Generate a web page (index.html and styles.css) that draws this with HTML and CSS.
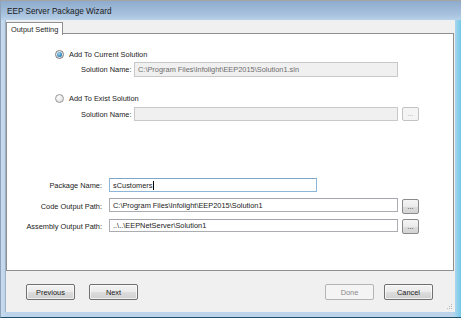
FILE: index.html
```html
<!DOCTYPE html>
<html>
<head>
<meta charset="utf-8">
<link rel="stylesheet" href="styles.css">
</head>
<body>
<div class="window">
  <div class="titlebar">EEP Server Package Wizard</div>
  <div class="frame">
    <div class="client">
      <div class="tabstrip">
        <div class="tab">Output Setting</div>
      </div>
      <div class="panel">
        <div class="radio-row first">
          <span class="radio checked"><span class="dot"></span></span>
          <span>Add To Current Solution</span>
        </div>
        <div class="sub-row r1">
          <span class="sub-label">Solution Name:</span>
          <div class="textbox disabled">C:\Program Files\Infolight\EEP2015\Solution1.sln</div>
        </div>
        <div class="radio-row second">
          <span class="radio"></span>
          <span>Add To Exist Solution</span>
        </div>
        <div class="sub-row r2">
          <span class="sub-label">Solution Name:</span>
          <div class="textbox disabled"></div>
          <div class="browse disabled">...</div>
        </div>
        <div class="form">
          <div class="form-row pkg">
            <span class="form-label">Package Name:</span>
            <div class="textbox focused short">sCustomers<span class="caret"></span></div>
          </div>
          <div class="form-row code">
            <span class="form-label">Code Output Path:</span>
            <div class="textbox">C:\Program Files\Infolight\EEP2015\Solution1</div>
            <div class="browse">...</div>
          </div>
          <div class="form-row asm">
            <span class="form-label">Assembly Output Path:</span>
            <div class="textbox">..\..\EEPNetServer\Solution1</div>
            <div class="browse">...</div>
          </div>
        </div>
      </div>
      <div class="buttonbar">
        <div class="btn-group left">
          <div class="btn">Previous</div>
          <div class="btn">Next</div>
        </div>
        <div class="btn-group right">
          <div class="btn disabled">Done</div>
          <div class="btn">Cancel</div>
        </div>
        <svg class="grip" width="6" height="6" viewBox="0 0 6 6">
          <rect x="4" y="0" width="1" height="1" fill="#b9b9b9"/>
          <rect x="2" y="2" width="1" height="1" fill="#b9b9b9"/>
          <rect x="4" y="2" width="1" height="1" fill="#b9b9b9"/>
          <rect x="0" y="4" width="1" height="1" fill="#b9b9b9"/>
          <rect x="2" y="4" width="1" height="1" fill="#b9b9b9"/>
          <rect x="4" y="4" width="1" height="1" fill="#b9b9b9"/>
        </svg>
      </div>
    </div>
  </div>
</div>
</body>
</html>
```
FILE: styles.css
```css
* { box-sizing: border-box; }
html, body { margin: 0; padding: 0; }
body {
  width: 461px;
  height: 318px;
  overflow: hidden;
  font-family: "Liberation Sans", Arial, sans-serif;
  font-size: 7.4px;
  color: #1b1b1b;
  background: #ffffff;
}
.window {
  width: 461px;
  height: 318px;
  display: flex;
  flex-direction: column;
  border-top: 1px solid #a3a3a3;
  border-left: 1px solid #8ea2b8;
  border-bottom: 1px solid #1f4f6a;
  background: linear-gradient(to bottom, #8eabcc 0px, #a9c3df 14px, #b9d2ea 19px, #bcd5ec 100%);
}
.titlebar {
  height: 19px;
  padding-left: 6px;
  display: flex;
  align-items: center;
  font-size: 8.2px;
  color: #1a1a1a;
  padding-top: 2px;
}
.frame {
  flex: 1;
  display: flex;
  padding: 0 6px 5px 4px;
  background: linear-gradient(to right, #c9dbee 0, #bcd4eb 5px, #bcd4eb 452px, #9fd4ee 455px, #72c8e6 460px);
}
.client {
  flex: 1;
  background: #f0f0f0;
  display: flex;
  flex-direction: column;
  border-left: 1px solid #9db0c5;
  position: relative;
}
.tabstrip {
  height: 14px;
  padding-top: 2px;
  display: flex;
  position: relative;
  z-index: 1;
}
.tab {
  width: 57px;
  height: 13px;
  background: #ffffff;
  border: 1px solid #8f8f8f;
  border-bottom: none;
  padding-left: 4px;
  display: flex;
  align-items: center;
}
.panel {
  height: 238px;
  margin-right: 1px;
  background: #ffffff;
  border: 1px solid #8f8f8f;
  margin-top: -1px;
  display: flex;
  flex-direction: column;
}
.radio-row {
  height: 11px;
  display: flex;
  align-items: center;
  padding-left: 48px;
}
.radio-row.first { margin-top: 15px; }
.radio-row.second { margin-top: 16px; }
.radio {
  width: 9px;
  height: 9px;
  border-radius: 50%;
  border: 1px solid #9a9a9a;
  background: radial-gradient(circle at 40% 35%, #ffffff 0, #e6e6e6 60%, #cfcfcf 100%);
  margin-right: 5px;
  display: flex;
  align-items: center;
  justify-content: center;
}
.radio.checked { border-color: #7c7c7c; }
.radio .dot {
  width: 5px;
  height: 5px;
  border-radius: 50%;
  background: radial-gradient(circle at 40% 35%, #9fd8f5 0, #2a7db4 70%, #1d5a8a 100%);
}
.sub-row {
  display: flex;
  align-items: center;
  padding-left: 74px;
}
.sub-row.r1 { margin-top: 2px; height: 15px; }
.sub-row.r2 { margin-top: 3px; height: 14px; }
.sub-label {
  width: 53px;
  flex: none;
}
.textbox {
  width: 264px;
  height: 14px;
  border: 1px solid #abadb3;
  border-top-color: #a3a6ad;
  background: #ffffff;
  display: flex;
  align-items: center;
  padding-left: 3px;
  white-space: nowrap;
  overflow: hidden;
  color: #1b1b1b;
}
.sub-row.r1 .textbox { height: 15px; }
.textbox.disabled {
  background: #f0f0f0;
  border-color: #c8c8c8;
  color: #6d6d6d;
}
.textbox.focused {
  border-color: #8fb6d6;
  border-top-color: #7ea6c8;
}
.caret {
  display: inline-block;
  width: 1px;
  height: 9px;
  background: #000;
  margin-left: 1px;
}
.browse {
  width: 17px;
  height: 15px;
  margin-left: 4px;
  border: 1px solid #8a8a8a;
  border-radius: 2px;
  background: linear-gradient(to bottom, #f4f4f4 0, #ebebeb 50%, #dcdcdc 51%, #d4d4d4 100%);
  display: flex;
  align-items: center;
  justify-content: center;
  font-size: 7px;
  line-height: 7px;
  padding-bottom: 1px;
  flex: none;
}
.browse.disabled {
  height: 14px;
  border-color: #c2c2c2;
  background: #f4f4f4;
  color: #a0a0a0;
}
.form {
  margin-top: 57px;
  display: flex;
  flex-direction: column;
}
.form-row {
  display: flex;
  align-items: center;
}
.form-row.pkg { height: 14px; }
.form-row.code { margin-top: 6px; height: 16px; }
.form-row.asm { margin-top: 5px; height: 15px; }
.form-row.code .textbox { align-self: flex-start; }
.form-row.asm .textbox { align-self: flex-start; height: 13px; }
.form-row.code .browse { align-self: flex-end; }
.form-label {
  width: 95px;
  text-align: right;
  margin-right: 7px;
  flex: none;
}
.form-row .textbox { width: 289px; }
.form-row .textbox.short { width: 208px; }
.buttonbar {
  flex: 1;
  display: flex;
  justify-content: space-between;
  padding: 13px 22px 0 20px;
  position: relative;
}
.btn-group { display: flex; }
.btn-group.left { gap: 14px; }
.btn-group.right { gap: 10px; }
.btn {
  width: 49px;
  height: 16px;
  border: 1px solid #707070;
  border-radius: 2px;
  background: linear-gradient(to bottom, #f2f2f2 0, #ebebeb 50%, #dddddd 51%, #cfcfcf 100%);
  box-shadow: inset 0 0 0 1px rgba(255,255,255,0.7);
  display: flex;
  align-items: center;
  justify-content: center;
  color: #1b1b1b;
}
.btn.disabled {
  border-color: #b5b5b5;
  background: #f4f4f4;
  box-shadow: none;
  color: #8a8a8a;
}
.grip {
  position: absolute;
  right: 2px;
  bottom: 2px;
}
```
